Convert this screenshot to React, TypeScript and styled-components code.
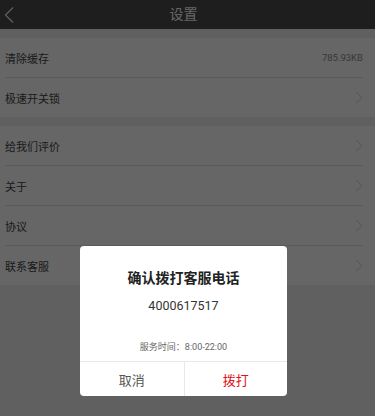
import React from "react";
import styled, { createGlobalStyle } from "styled-components";

const GlobalStyle = createGlobalStyle`
  html, body { margin: 0; padding: 0; }
  body {
    font-family: Roboto, "Noto Sans CJK SC", "Noto Sans", sans-serif;
    background: #eff0f3;
  }
  * { box-sizing: border-box; }
`;

const Screen = styled.div`
  position: relative;
  width: 375px;
  height: 416px;
  overflow: hidden;
  background: #eff0f3;
`;

const Header = styled.header`
  height: 29px;
  background: #4b4b4b;
  display: grid;
  grid-template-columns: 40px 1fr 40px;
  align-items: center;
`;

const BackButton = styled.div`
  display: flex;
  align-items: center;
  padding-left: 3px;
  height: 29px;
`;

const Title = styled.div`
  text-align: center;
  color: #ffffff;
  font-size: 14px;
  line-height: 29px;
  margin-left: -8px;
`;

const Section = styled.section`
  margin-top: 9px;
  background: #ffffff;
`;

const Row = styled.div`
  padding: 0 12px 0 5px;
`;

const RowInner = styled.div<{ $last?: boolean }>`
  height: ${(p) => (p.$last ? "39px" : "40px")};
  border-bottom: ${(p) => (p.$last ? "none" : "1px solid #e2e2e2")};
  display: flex;
  align-items: center;
  justify-content: space-between;
`;

const Label = styled.span`
  font-size: 11px;
  color: #444;
`;

const Value = styled.span`
  font-size: 9.5px;
  color: #8e8e8e;
`;

const Overlay = styled.div`
  position: absolute;
  inset: 0;
  background: rgba(0, 0, 0, 0.6);
`;

const Dialog = styled.div`
  position: absolute;
  left: 80px;
  top: 246px;
  width: 207px;
  height: 150px;
  background: #fff;
  border-radius: 4px;
  display: flex;
  flex-direction: column;
  overflow: hidden;
`;

const DialogBody = styled.div`
  flex: 1;
  display: flex;
  flex-direction: column;
  align-items: center;
  padding-top: 22px;
`;

const DialogTitle = styled.div`
  font-size: 14px;
  font-weight: 700;
  line-height: 20px;
  color: #222;
`;

const Phone = styled.div`
  margin-top: 8px;
  font-size: 12.5px;
  line-height: 20px;
  color: #333;
`;

const ServiceTime = styled.div`
  margin-top: 25px;
  font-size: 9px;
  line-height: 12px;
  color: #666;
`;

const Actions = styled.div`
  height: 35px;
  border-top: 1px solid #e8e8e8;
  display: grid;
  grid-template-columns: 1fr 1fr;
`;

const ActionButton = styled.div<{ $primary?: boolean }>`
  display: flex;
  align-items: center;
  justify-content: center;
  font-size: 13px;
  color: ${(p) => (p.$primary ? "#e60f1a" : "#555")};
  border-left: ${(p) => (p.$primary ? "1px solid #e8e8e8" : "none")};
`;

const Chevron = () => (
  <svg width="8" height="13" viewBox="0 0 8 13">
    <polyline points="1,1 7,6.5 1,12" fill="none" stroke="#d4d4d4" strokeWidth="1" />
  </svg>
);

const BackIcon = () => (
  <svg width="12" height="18" viewBox="0 0 12 18">
    <polyline points="10,1.5 2.5,9 10,16.5" fill="none" stroke="#e8e8e8" strokeWidth="1.3" />
  </svg>
);

const groupA = [
  { label: "清除缓存", value: "785.93KB" },
  { label: "极速开关锁" },
];
const groupB = [
  { label: "给我们评价" },
  { label: "关于" },
  { label: "协议" },
  { label: "联系客服" },
];

type Item = { label: string; value?: string };

const Group = ({ items }: { items: Item[] }) => (
  <Section>
    {items.map((it, i) => (
      <Row key={it.label}>
        <RowInner $last={i === items.length - 1}>
          <Label>{it.label}</Label>
          {it.value ? <Value>{it.value}</Value> : <Chevron />}
        </RowInner>
      </Row>
    ))}
  </Section>
);

export default function App() {
  return (
    <>
      <GlobalStyle />
      <Screen>
        <Header>
          <BackButton>
            <BackIcon />
          </BackButton>
          <Title>设置</Title>
          <div />
        </Header>
        <Group items={groupA} />
        <Group items={groupB} />
        <Overlay />
        <Dialog>
          <DialogBody>
            <DialogTitle>确认拨打客服电话</DialogTitle>
            <Phone>4000617517</Phone>
            <ServiceTime>服务时间：8:00-22:00</ServiceTime>
          </DialogBody>
          <Actions>
            <ActionButton>取消</ActionButton>
            <ActionButton $primary>拨打</ActionButton>
          </Actions>
        </Dialog>
      </Screen>
    </>
  );
}
